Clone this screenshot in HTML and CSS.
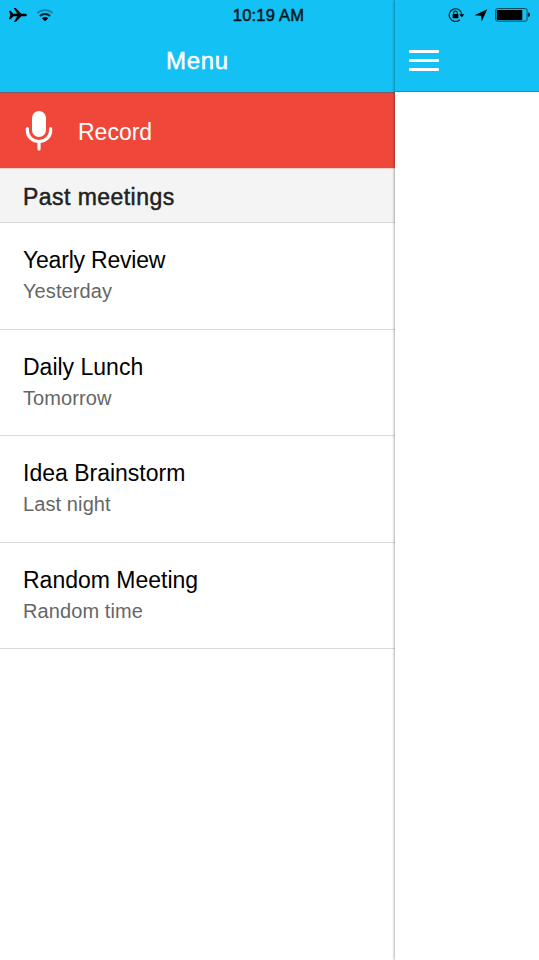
FILE: index.html
```html
<!DOCTYPE html>
<html lang="en">

<head>
    <meta charset="UTF-8">
    <meta name="viewport" content="width=device-width, initial-scale=1.0">
    <title>Menu</title>
    <link rel="stylesheet" href="styles.css">
</head>

<body>
    <!-- Status bar -->
    <div class="status-bar">
        <div class="status-left">
            <svg class="icon-plane" width="20" height="16" viewBox="0 0 20 18" preserveAspectRatio="none">
                <path d="M1 4.2h1.7l2.6 3.3h4L5.8 1h2l5.6 6.5h3.4c1.2 0 2.2.7 2.2 1.5s-1 1.5-2.2 1.5h-3.4L7.800 17h-2l3.500-6.500h-4L2.700 13.800H1L2.300 9z"/>
            </svg>
            <svg class="icon-wifi" width="18" height="14" viewBox="0 0 18 14">
                <path d="M1.400 5.200a11 11 0 0 1 15.200 0" fill="none" stroke="#0a86ad" stroke-width="1.700"/>
                <path d="M3.900 8a7.300 7.300 0 0 1 10.200 0" fill="none" stroke="#06242e" stroke-width="2"/>
                <path d="M5.900 10.200a4.400 4.400 0 0 1 6.200 0L9 13.300z"/>
            </svg>
        </div>
        <div class="status-time">10:19 AM</div>
        <div class="status-right">
            <svg width="17" height="16" viewBox="0 0 17 16">
                <path d="M11.800 12.700A6.300 6.300 0 1 1 13.800 7.600" fill="none" stroke="#06242e" stroke-width="1.200"/>
                <path d="M11.300 7.300h5l-2.500 3.200z"/>
                <path d="M5.700 7.300V6a1.800 1.800 0 0 1 3.600 0v1.300" fill="none" stroke="#06242e" stroke-width="1.200"/>
                <rect x="4.600" y="7" width="5.800" height="4.300" rx=".5"/>
            </svg>
            <svg class="icon-location" width="14" height="13" viewBox="0 0 14 13">
                <path d="M13.300.3L7.700 12.500 7 6.800.5 6.200z"/>
            </svg>
            <svg class="icon-battery" width="36" height="14" viewBox="0 0 36 14">
                <rect x=".6" y=".6" width="31.500" height="12.500" rx="1.600" fill="none" stroke="#06465a" stroke-width="1"/>
                <rect x="1.800" y="1.900" width="25.500" height="10" rx=".6"/>
                <path d="M33.200 4.600c2.200.3 2.200 4.300 0 4.600z"/>
            </svg>
        </div>
    </div>

    <div class="app">
        <!-- Side menu -->
        <div class="side-menu">
            <header class="bar">
                <h1>Menu</h1>
            </header>
            <a class="record">
                <svg width="28" height="42" viewBox="0 0 28 42">
                    <rect x="7" y="1" width="14" height="26" rx="7" fill="#fff"/>
                    <path d="M2.400 18.500v2.200a11.600 10.800 0 0 0 23.200 0v-2.200M14 31.500v7.500" fill="none" stroke="#fff" stroke-width="3.200" stroke-linecap="round"/>
                </svg>
                <span>Record</span>
            </a>
            <div class="divider">Past meetings</div>
            <ul class="meetings">
                <li>
                    <h2>Yearly Review</h2>
                    <p>Yesterday</p>
                </li>
                <li>
                    <h2>Daily Lunch</h2>
                    <p>Tomorrow</p>
                </li>
                <li>
                    <h2>Idea Brainstorm</h2>
                    <p>Last night</p>
                </li>
                <li>
                    <h2>Random Meeting</h2>
                    <p>Random time</p>
                </li>
            </ul>
        </div>

        <!-- Main content, pushed to the right -->
        <div class="content">
            <header class="bar bar-content">
                <button class="menu-button" aria-label="Menu">
                    <span></span>
                    <span></span>
                    <span></span>
                </button>
            </header>
        </div>
    </div>
</body>

</html>
```
FILE: styles.css
```css
* {
    box-sizing: border-box;
}

body {
    margin: 0;
    font-family: "Liberation Sans", Arial, sans-serif;
    color: #000;
    background-color: #fff;
}

h1, h2, p, ul {
    margin: 0;
    padding: 0;
    font-weight: normal;
}

svg {
    display: block;
}

.status-bar {
    position: absolute;
    top: 0;
    left: 0;
    right: 0;
    z-index: 2;
    height: 30px;
    padding: 0 8px;
    display: grid;
    grid-template-columns: 1fr auto 1fr;
    align-items: center;
}

.status-left,
.status-right {
    display: flex;
    align-items: center;
}

.status-right {
    justify-content: flex-end;
}

.icon-wifi {
    margin-left: 8px;
}

.icon-location {
    margin: 0 7px 0 9px;
}

.status-time {
    padding-right: 2px;
    font-size: 16.5px;
    letter-spacing: 0.2px;
    color: #03161d;
    -webkit-text-stroke: 0.5px #03161d;
}

.app {
    display: flex;
    height: 960px;
    overflow: hidden;
}

.side-menu {
    width: 395px;
    flex: none;
}

.content {
    position: relative;
    flex: 1;
    background-color: #fff;
    box-shadow: 0 0 3px rgba(0, 0, 0, 0.55);
}

.bar {
    height: 93px;
    padding-top: 30px;
    display: flex;
    align-items: center;
    justify-content: center;
    background-color: #13c1f4;
    border-bottom: 1px solid #0f9ac3;
}

.side-menu .bar {
    border-bottom-color: #7d5a60;
}

.bar h1 {
    font-size: 24px;
    letter-spacing: 0.7px;
    color: #fff;
    -webkit-text-stroke: 0.5px #fff;
}

.bar-content {
    height: 92px;
    justify-content: flex-start;
    padding-left: 14px;
}

.menu-button {
    display: flex;
    flex-direction: column;
    gap: 6px;
    padding: 0;
    border: none;
    background: none;
}

.menu-button span {
    width: 30px;
    height: 3px;
    border-radius: 1px;
    background-color: #fff;
}

.record {
    display: flex;
    align-items: center;
    gap: 25px;
    height: 75px;
    padding-left: 25px;
    background-color: #ef473a;
    color: #fff;
    font-size: 23px;
}

.record span {
    padding-top: 3px;
}

.divider {
    height: 55px;
    padding-left: 23px;
    line-height: 56px;
    font-size: 23px;
    letter-spacing: 0.45px;
    color: #222;
    background-color: #f4f4f4;
    border-top: 1px solid #e9cfcd;
    border-bottom: 1px solid #d9d9d9;
    -webkit-text-stroke: 0.5px #222;
}

.meetings {
    list-style: none;
}

.meetings li {
    height: 106.5px;
    padding: 22px 23px 0;
    border-bottom: 1px solid #d9d9d9;
}

.meetings h2 {
    font-size: 23px;
    line-height: 30px;
}

.meetings li:first-child h2 {
    letter-spacing: -0.2px;
}

.meetings p {
    font-size: 20px;
    line-height: 32px;
    letter-spacing: 0.1px;
    color: #666;
}
```
